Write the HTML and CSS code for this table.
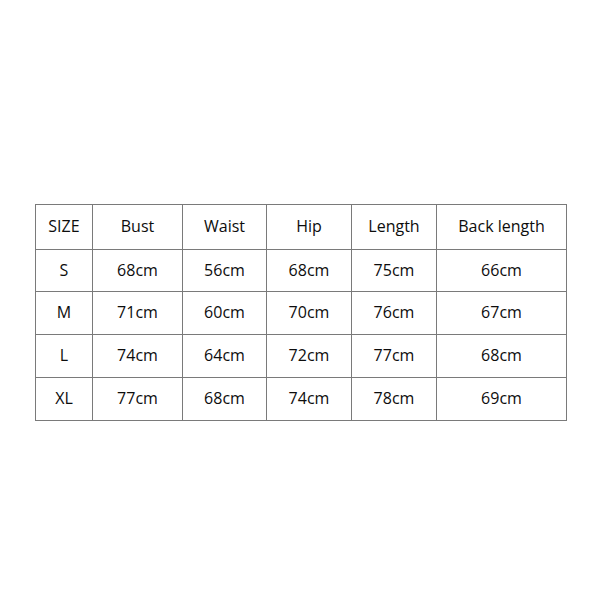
FILE: index.html
```html
<!DOCTYPE html>
<html>
<head>
<meta charset="utf-8">
<link rel="stylesheet" href="styles.css">
</head>
<body>
<div class="page">
<table class="sizes">
<colgroup>
<col class="c1"><col class="c2"><col class="c3"><col class="c4"><col class="c5"><col class="c6">
</colgroup>
<tr class="head"><td>SIZE</td><td>Bust</td><td>Waist</td><td>Hip</td><td>Length</td><td>Back length</td></tr>
<tr class="r2"><td>S</td><td>68cm</td><td>56cm</td><td>68cm</td><td>75cm</td><td>66cm</td></tr>
<tr><td>M</td><td>71cm</td><td>60cm</td><td>70cm</td><td>76cm</td><td>67cm</td></tr>
<tr><td>L</td><td>74cm</td><td>64cm</td><td>72cm</td><td>77cm</td><td>68cm</td></tr>
<tr><td>XL</td><td>77cm</td><td>68cm</td><td>74cm</td><td>78cm</td><td>69cm</td></tr>
</table>
</div>
</body>
</html>
```
FILE: styles.css
```css
html, body {
  margin: 0;
  padding: 0;
  background: #ffffff;
}
.page {
  width: 600px;
  height: 600px;
  padding: 204px 0 0 35px;
  box-sizing: border-box;
}
.sizes {
  border-collapse: collapse;
  table-layout: fixed;
  width: 531px;
  font-family: "Open Sans", "Liberation Sans", sans-serif;
  font-size: 16px;
  color: #0d0d0d;
}
.sizes td {
  border: 1px solid #7a7a7a;
  padding: 0 0 2px 0;
  text-align: center;
  vertical-align: middle;
  height: 40px;
  line-height: 20px;
}
.sizes .head td { height: 42px; }
.sizes .r2 td { height: 39px; }
.c1 { width: 57px; }
.c2 { width: 90px; }
.c3 { width: 84px; }
.c4 { width: 85px; }
.c5 { width: 85px; }
.c6 { width: 130px; }
```
